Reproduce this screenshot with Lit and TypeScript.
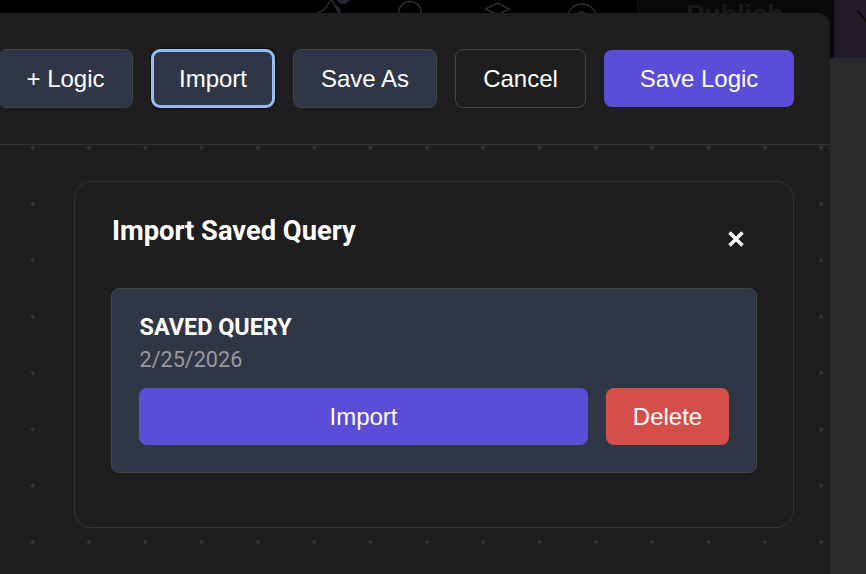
import { LitElement, html, css, svg } from "lit";
import { customElement } from "lit/decorators.js";

@customElement("app-root")
export class AppRoot extends LitElement {
  static styles = css`
    :host {
      display: block;
      width: 866px;
      height: 574px;
      position: relative;
      overflow: hidden;
      background: #2a2a2a;
      font-family: "Liberation Sans", Arial, sans-serif;
      color: #fff;
    }
    .topbar {
      height: 58px;
      background: #000;
      position: relative;
      overflow: hidden;
    }
    .publish-box {
      position: absolute;
      left: 636px;
      top: 0;
      width: 198px;
      height: 58px;
      background: #090909;
      display: flex;
      justify-content: center;
      font-weight: 700;
      font-size: 27px;
      line-height: 31px;
      color: #191919;
    }
    .top-icons {
      position: absolute;
      left: 0;
      top: 0;
      width: 866px;
      height: 14px;
    }
    .avatar {
      position: absolute;
      left: 834px;
      top: 0;
      width: 32px;
      height: 58px;
      background: #211a28;
    }
    .avatar svg {
      display: block;
      width: 32px;
      height: 58px;
    }
    .modal {
      position: absolute;
      left: 0;
      top: 13px;
      width: 830px;
      height: 561px;
      background: #1e1e1e;
      border-top-right-radius: 12px;
      display: flex;
      flex-direction: column;
      overflow: hidden;
    }
    .toolbar {
      height: 132px;
      flex: none;
      box-sizing: border-box;
      border-bottom: 1px solid #333;
      display: flex;
      justify-content: flex-end;
      align-items: center;
      gap: 18px;
      padding: 0 36px 1px 0;
    }
    button {
      font: 400 24px "Liberation Sans", Arial, sans-serif;
      color: #fff;
      border-radius: 8px;
      box-sizing: border-box;
      border: 1px solid #444;
      height: 59px;
      padding: 1px 0 0;
      flex: none;
      margin: 0;
    }
    .slate { background: #2f3747; }
    .ghost { background: transparent; }
    .primary { background: #5a4dd8; border: none; }
    .logic { width: 135px; }
    .saveas { width: 144px; }
    .cancel { width: 131px; }
    .savelogic { width: 190px; height: 57px; }
    .focus {
      width: 124px;
      height: 59px;
      border: 3px solid #95bcf3;
      border-radius: 9px;
      box-shadow: 0 0 0 1.5px #131313;
    }
    .canvas {
      flex: 1;
      box-sizing: border-box;
      padding: 36px 36px 46px 74px;
      display: flex;
      background-image: radial-gradient(circle, #383838 1.7px, transparent 2.2px);
      background-size: 56.33px 56.33px;
      background-position: 4.5px -25.5px;
    }
    .panel {
      flex: 1;
      background: #1e1e1e;
      border: 1px solid #333;
      border-radius: 17px;
      padding: 28px 36px 0;
      box-sizing: border-box;
      display: flex;
      flex-direction: column;
      position: relative;
    }
    h2 {
      margin: 0 0 0 1px;
      font: 700 27.3px/42px Roboto, sans-serif;
      height: 78px;
    }
    .close {
      position: absolute;
      left: 651px;
      top: 47px;
      width: 20px;
      height: 20px;
      display: block;
    }
    .card {
      height: 185px;
      background: #2f3747;
      border: 1px solid #444;
      border-radius: 8px;
      padding: 25px 27px 0;
      box-sizing: border-box;
    }
    .name {
      margin-left: 0.5px;
      font: 700 23.4px/26px Roboto, sans-serif;
    }
    .date {
      margin-left: 0.5px;
      font: 400 21.6px/28px Roboto, sans-serif;
      color: #9a9a9a;
      margin-top: 6px;
      margin-bottom: 14px;
    }
    .actions {
      display: flex;
      gap: 18px;
    }
    .actions button {
      height: 57px;
    }
    .actions .primary { flex: 1; }
    .danger {
      background: #d44f4a;
      border: none;
      width: 123px;
    }
  `;

  render() {
    return html`
      <div class="topbar">
        <div class="publish-box">Publish</div>
        <svg class="top-icons" viewBox="0 0 866 14" fill="none" stroke="#2e2e2e" stroke-width="1.5">
          ${svg`
            <path d="M317 13 Q325 11 329 3 Q331 -1 333 2 L339 13"/>
            <path d="M336 6 Q341 9 339 14"/>
            <circle cx="343" cy="-3" r="7" fill="#2d2236" stroke="none"/>
            <circle cx="410" cy="13" r="11.5"/>
            <path d="M485.5 9 L497.5 3 L509.5 9 L497.5 15 Z"/>
            <circle cx="582" cy="18.5" r="14.5"/>
            <circle cx="582" cy="15" r="3"/>
          `}
        </svg>
        <div class="avatar">
          <svg viewBox="0 0 32 58" fill="none" stroke="#0d0d0d" stroke-width="2">
            <path d="M23 10 L34 23"/>
          </svg>
        </div>
      </div>
      <div class="modal">
        <div class="toolbar">
          <button class="slate logic">+ Logic</button>
          <button class="slate focus">Import</button>
          <button class="slate saveas">Save As</button>
          <button class="ghost cancel">Cancel</button>
          <button class="primary savelogic">Save Logic</button>
        </div>
        <div class="canvas">
          <div class="panel">
            <h2>Import Saved Query</h2>
            <svg class="close" viewBox="0 0 20 20" fill="none" stroke="#fff" stroke-width="3.4">
              <path d="M3.5 3.5 L16.5 16.5 M16.5 3.5 L3.5 16.5"/>
            </svg>
            <div class="card">
              <div class="name">SAVED QUERY</div>
              <div class="date">2/25/2026</div>
              <div class="actions">
                <button class="primary">Import</button>
                <button class="danger">Delete</button>
              </div>
            </div>
          </div>
        </div>
      </div>
    `;
  }
}
